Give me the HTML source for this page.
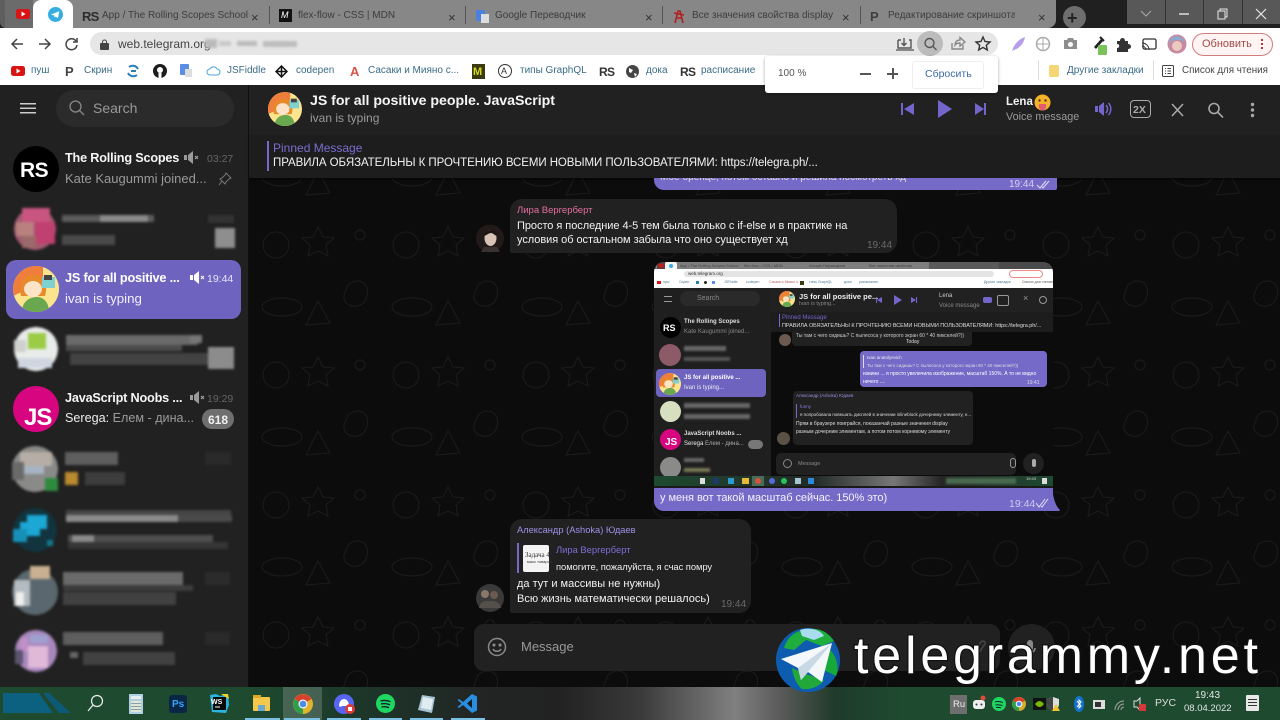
<!DOCTYPE html>
<html lang="ru"><head><meta charset="utf-8"><title>Telegram</title>
<style>
html,body{margin:0;padding:0;background:#0d0d0d}
#p{position:relative;width:1280px;height:720px;overflow:hidden;font-family:"Liberation Sans","Noto Sans CJK SC",sans-serif;background:#0d0d0d}
#p div,#p span.t,#p svg.a{position:absolute}
.t{white-space:nowrap;line-height:1;position:absolute}
.tab{font-size:10px;color:#3d3d3d}
.x{font-size:13px;color:#333}
.bm{font-size:10px;color:#3a6b86;top:66px}
.dk{color:#333}
.m{font-size:11px;letter-spacing:-.05px;color:#f2f2f2}
.gt{font-size:10px;color:#6a6a6a}
.n .t{font-size:6px;color:#ddd}
.nm{font:bold 12.700px 'Liberation Sans';letter-spacing:-.2px}
</style></head><body><div id="p">

<svg width="0" height="0" style="position:absolute"><defs>
<symbol id="um" viewBox="0 0 46 46"><clipPath id="c1"><circle cx="23" cy="23" r="23"/></clipPath><g clip-path="url(#c1)"><rect width="46" height="46" fill="#fbe48e"/><path d="M0 0h30v16L0 30z" fill="#ef7d3c"/><path d="M8 30C4 12 18 6 26 10c8 3 8 14 6 20z" fill="#e88a2a"/><ellipse cx="20" cy="23" rx="9" ry="8" fill="#fde3c8"/><path d="M9 46c0-11 8-15 15-15s12 6 12 15z" fill="#6aa84f"/><rect x="29" y="11" width="13" height="11" fill="#7fd0d0"/><rect x="31" y="9" width="8" height="5" fill="#444"/></g></symbol>
<pattern id="dd" width="130" height="130" patternUnits="userSpaceOnUse"><g fill="none" stroke="#1b1b1b" stroke-width="1"><circle cx="28" cy="30" r="13"/><path d="M70 12l5 10 11 1-8 7 2 11-10-5-10 5 2-11-8-7 11-1z"/><path d="M100 70c12-10 24 0 18 14-5 12-24 8-22-4z"/><ellipse cx="34" cy="92" rx="20" ry="9"/><path d="M70 86l12 22-24 2z"/><circle cx="112" cy="20" r="5"/></g></pattern>
</defs></svg>

<!-- tab strip -->
<div style="left:0;top:0;width:1280px;height:28px;background:#202020"></div>
<div style="left:5px;top:0;width:1051px;height:28px;background:#878787;border-radius:0 0 8px 0"></div>
<div style="left:0;top:0;width:33px;height:28px;background:#5e5e5e;border-radius:0 0 0 6px"></div>
<div style="left:5px;top:0;width:28px;height:28px;background:#6b6b6b"></div>
<div style="left:33px;top:0;width:40px;height:28px;background:#fff;border-radius:8px 8px 0 0"></div>
<svg class="a" style="left:16px;top:9px" width="14" height="10"><rect width="14" height="10" rx="2.500" fill="#d81414"/><path d="M5.500 2.500l4 2.500-4 2.500z" fill="#fff"/></svg>
<svg class="a" style="left:48px;top:7px" width="15" height="15"><circle cx="7.500" cy="7.500" r="7.500" fill="#37aee2"/><path d="M3 7.500l8.300-3.200-1.400 6.800-2.200-1.600-1.200 1.100-.2-2z" fill="#fff"/></svg>
<div class="t" style="left:82px;top:9px;font:bold 13px 'Liberation Sans';color:#2d2d2d;letter-spacing:-.8px">RS</div>
<div class="t tab" style="left:102px;top:11px">App / The Rolling Scopes School</div>
<div class="t x" style="left:251px;top:11px">×</div>
<div style="left:269px;top:6px;width:1px;height:18px;background:#555"></div>
<div style="left:279px;top:9px;width:13px;height:13px;background:#111"></div><div class="t" style="left:281px;top:11px;font-size:9px;color:#fff;font-style:italic">M</div>
<div class="t tab" style="left:298px;top:11px">flex-flow - CSS | MDN</div>
<div class="t x" style="left:448px;top:11px">×</div>
<div style="left:465px;top:6px;width:1px;height:18px;background:#555"></div>
<div style="left:476px;top:10px;width:9px;height:11px;background:#4a80e0;border-radius:1px"></div><div style="left:481px;top:14px;width:8px;height:9px;background:#ddd"></div>
<div class="t tab" style="left:495px;top:11px">Google Переводчик</div>
<div class="t x" style="left:645px;top:11px">×</div>
<div style="left:662px;top:6px;width:1px;height:18px;background:#555"></div>
<svg class="a" style="left:673px;top:9px" width="12" height="15"><path d="M2 14L5 2h2l3 12M1 4l10 2M3 9h6" stroke="#b02020" stroke-width="1.600" fill="none"/></svg>
<div class="t tab" style="left:692px;top:11px">Все значения свойства display</div>
<div class="t x" style="left:842px;top:11px">×</div>
<div style="left:860px;top:6px;width:1px;height:18px;background:#555"></div>
<div class="t" style="left:870px;top:9px;font:bold 13px 'Liberation Sans';color:#3f3f3f">P</div>
<div class="t tab" style="left:888px;top:11px;width:127px;overflow:hidden">Редактирование скриншота - Lightshot</div>
<div class="t x" style="left:1038px;top:11px">×</div>
<div style="left:1063px;top:6px;width:23px;height:23px;border-radius:50%;background:#6e6e6e"></div>
<div class="t" style="left:1067px;top:9px;font-size:18px;color:#222;font-weight:bold">+</div>
<!-- window controls -->
<div style="left:1127px;top:0;width:153px;height:24px;background:#585858"></div>
<div style="left:1165px;top:0;width:1px;height:24px;background:#333"></div><div style="left:1203px;top:0;width:1px;height:24px;background:#333"></div><div style="left:1242px;top:0;width:1px;height:24px;background:#333"></div>
<svg class="a" style="left:1140px;top:8px" width="140" height="12" fill="none" stroke="#e8e8e8" stroke-width="1"><path d="M1 3l5 5 5-5" stroke="#aaa"/><path d="M39 6h10" stroke-width="1.400"/><path d="M78 3h7v8h-7zM80 3V1h7v8h-2"/><path d="M116 1l10 10M126 1l-10 10" stroke-width="1.200"/></svg>

<!-- toolbar -->
<div style="left:0;top:28px;width:1280px;height:57px;background:#fff"></div>
<div style="left:90px;top:32px;width:908px;height:23px;border-radius:12px;background:#e6e6e6"></div>
<svg class="a" style="left:10px;top:36px" width="72" height="16" fill="none" stroke="#444" stroke-width="1.500"><path d="M13 8H2M7 3L2 8l5 5"/><path d="M29 8h11M35 3l5 5-5 5"/><path d="M66 5a5.500 5.500 0 1 0 1 4M67 2v4h-4"/></svg>
<svg class="a" style="left:100px;top:39px" width="9" height="11"><rect y="4" width="9" height="7" rx="1" fill="#444"/><path d="M2.500 4.500V3a2 2 0 0 1 4 0v1.500" stroke="#444" fill="none"/></svg>
<div class="t" style="left:118px;top:38px;font-size:12px;color:#444">web.telegram.org</div>
<svg class="a" style="left:205px;top:38px;filter:blur(1.200px)" width="95" height="12"><rect x="0" y="1" width="12" height="9" fill="#bbb"/><rect x="14" y="3" width="12" height="5" fill="#c8c8c8"/><rect x="32" y="3" width="20" height="5" fill="#bbb"/><rect x="58" y="3" width="34" height="6" fill="#bdbdbd"/></svg>
<div style="left:917px;top:31px;width:26px;height:25px;border-radius:50%;background:#bcbcbc"></div>
<svg class="a" style="left:895px;top:35px" width="100" height="18" fill="none" stroke="#555" stroke-width="1.400"><path d="M3 5h3M14 5h2v8H3V5M9 3v7M6.500 8L9 10.500 11.500 8"/><path d="M1 15h18" stroke="#666"/><circle cx="34.500" cy="8" r="4.500"/><path d="M38 11.500l3.500 3.500"/><path d="M57 8v6h11v-4M60 10c0-3 2-5 5-5V2.500l5 4.500-5 4V8c-2 0-4 .5-5 2z" stroke="#888"/><path d="M88 2l2 4.500 5 .5-3.700 3.200 1 4.800-4.300-2.600L83.700 15l1-4.800L81 7l5-.5z" stroke="#333"/></svg>
<svg class="a" style="left:1008px;top:34px" width="170" height="22"><path d="M4 17C6 10 11 5 17 3c-1 6-5 11-11 13z" fill="#b79ee8"/><circle cx="35" cy="10" r="6.500" fill="none" stroke="#a9a9a9" stroke-width="1.500"/><path d="M29 10h12M35 3.500v13" stroke="#a9a9a9"/><path d="M56 6h3l1-2h5l1 2h3v9H56z" fill="#8e8e8e"/><circle cx="62.500" cy="10.500" r="2.500" fill="#fff"/><path d="M86 13l7-8 2 2-7 8z" fill="#222"/><path d="M92 3l4 4" stroke="#222" stroke-width="2"/><rect x="90" y="11" width="9" height="10" rx="1" fill="#7ac25a"/><path d="M109 7h3c0-4 5-4 5 0h3v3c4 0 4 5 0 5v3h-11v-4c3 0 3-4 0-4z" fill="#333"/><rect x="135" y="5" width="13" height="10" rx="1.500" fill="none" stroke="#333" stroke-width="1.300"/><path d="M134 12a4 4 0 0 1 4 4M134 9a7 7 0 0 1 7 7" stroke="#333" fill="none"/></svg>
<svg class="a" style="left:1167px;top:34px" width="20" height="20"><circle cx="10" cy="10" r="9.500" fill="#c88aa0"/><path d="M2 9c0-8 14-10 16 0-3-3-6-3-8-3s-6 1-8 3z" fill="#8fa8cc"/><circle cx="10" cy="12" r="5" fill="#edc8c0"/></svg>
<div style="left:1192px;top:33px;width:79px;height:21px;border:1px solid #d27d7d;border-radius:12px;background:#fdf4f3"></div>
<div class="t" style="left:1202px;top:39px;font-size:11px;color:#a24a46">Обновить</div>
<div style="left:1261px;top:39px;width:2px;height:2px;background:#b33;box-shadow:0 4px 0 #b33,0 8px 0 #b33"></div>

<!-- bookmarks -->
<svg class="a" style="left:11px;top:66px" width="14" height="10"><rect width="14" height="10" rx="2.500" fill="#d81414"/><path d="M5.500 2.500l4 2.500-4 2.500z" fill="#fff"/></svg>
<div class="t bm" style="left:31px">пуш</div>
<div class="t" style="left:65px;top:64px;font:bold 13px 'Liberation Sans';color:#444">P</div>
<div class="t bm" style="left:84px">Скрин</div>
<svg class="a" style="left:126px;top:64px" width="14" height="14" fill="none" stroke="#2b7fb8" stroke-width="2"><path d="M3 3a6 6 0 0 1 9 2M11 11a6 6 0 0 1-9-2M5 7h5"/></svg>
<svg class="a" style="left:153px;top:64px" width="14" height="14"><circle cx="7" cy="7" r="7" fill="#1d1d1d"/><circle cx="7" cy="6" r="3" fill="#fff"/><rect x="5.500" y="9" width="3" height="5" fill="#fff"/></svg>
<div style="left:180px;top:64px;width:9px;height:11px;background:#5a8ee6;border-radius:1px"></div><div style="left:185px;top:69px;width:7px;height:8px;background:#ddd"></div>
<svg class="a" style="left:206px;top:65px" width="15" height="12" fill="none" stroke="#4aa3d8"><path d="M4 10a3 3 0 0 1 0-6 4 4 0 0 1 7 0 3 3 0 0 1 0 6z"/></svg>
<div class="t bm" style="left:227px">JSFiddle</div>
<svg class="a" style="left:275px;top:65px" width="13" height="13" fill="none" stroke="#111" stroke-width="1.500"><path d="M6.500 1l5.500 5.500-5.500 5.500L1 6.500z"/><path d="M1 6.500h11M6.500 1v11"/></svg>
<div class="t bm" style="left:296px">codepen</div>
<div class="t" style="left:350px;top:64px;font:bold 13px 'Liberation Sans';color:#d9534a">A</div>
<div class="t bm" style="left:368px">Сасаки и Мияно с...</div>
<div style="left:472px;top:64px;width:13px;height:15px;background:#3a3a10"></div><div class="t" style="left:473px;top:66px;font:bold 11px 'Liberation Sans';color:#d8d820">M</div>
<div style="left:498px;top:64px;width:12px;height:12px;border:1px solid #333;border-radius:50%"></div><div class="t" style="left:501px;top:67px;font-size:9px;color:#333">A</div>
<div class="t bm" style="left:520px">типы GraphQL</div>
<div class="t" style="left:599px;top:65px;font:bold 12px 'Liberation Sans';color:#333;letter-spacing:-.7px">RS</div>
<svg class="a" style="left:626px;top:65px" width="13" height="13"><circle cx="6.500" cy="6.500" r="6.500" fill="#444"/><path d="M3 3l4 2-2 3-2-1zM8 8l3 1-2 3z" fill="#fff"/></svg>
<div class="t bm" style="left:646px">дока</div>
<div class="t" style="left:680px;top:65px;font:bold 12px 'Liberation Sans';color:#333;letter-spacing:-.7px">RS</div>
<div class="t bm" style="left:701px">расписание</div>
<div style="left:1038px;top:60px;width:1px;height:20px;background:#ddd"></div>
<div style="left:1049px;top:65px;width:10px;height:12px;background:#f4d774;border-radius:2px"></div>
<div class="t bm" style="left:1067px">Другие закладки</div>
<div style="left:1153px;top:60px;width:1px;height:20px;background:#ddd"></div>
<svg class="a" style="left:1162px;top:65px" width="12" height="12" fill="none" stroke="#444"><rect x=".5" y=".5" width="11" height="11" rx="1"/><path d="M3 3.500h1M3 6h1M3 8.500h1M5.500 3.500H9M5.500 6H9M5.500 8.500H9"/></svg>
<div class="t bm" style="left:1182px;color:#444;font-size:9.800px">Список для чтения</div>

<!-- app bg -->
<svg class="a" style="left:248px;top:85px" width="1032" height="602"><rect width="1032" height="602" fill="#0c0c0c"/><rect width="1032" height="602" fill="url(#dd)"/></svg>

<!-- sidebar -->
<div style="left:0;top:85px;width:248px;height:602px;background:#212121;border-right:1px solid #101010"></div>
<svg class="a" style="left:20px;top:103px" width="16" height="11" fill="#ccc"><rect width="16" height="1.500"/><rect y="4.500" width="16" height="1.500"/><rect y="9" width="16" height="1.500"/></svg>
<div style="left:56px;top:90px;width:178px;height:37px;border-radius:19px;background:#2b2b2b"></div>
<svg class="a" style="left:69px;top:100px" width="16" height="16" fill="none" stroke="#888" stroke-width="1.300"><circle cx="6.500" cy="6.500" r="5.500"/><path d="M10.500 10.500l4.500 4.500"/></svg>
<div class="t" style="left:93px;top:101px;font-size:14px;color:#9a9a9a">Search</div>

<div style="left:13px;top:146px;width:46px;height:46px;border-radius:50%;background:#000"></div>
<div class="t" style="left:20px;top:159px;font:bold 21px 'Liberation Sans';color:#fff;letter-spacing:-.5px">RS</div>
<div class="t nm" style="left:65px;top:151px;color:#f5f5f5">The Rolling Scopes</div>
<svg class="a" style="left:184px;top:151px" width="16" height="13"><path d="M0 4h3v5H0zM4 4l5-4v13L4 9z" fill="#9a9a9a"/><path d="M11 5l3 3M14 5l-3 3" stroke="#aaa"/></svg>
<div class="t" style="left:207px;top:154px;font-size:10.500px;color:#666">03:27</div>
<div class="t" style="left:65px;top:172px;font-size:13px;color:#9a9a9a">Kate Kaugummi joined...</div>
<svg class="a" style="left:218px;top:172px" width="14" height="14" fill="none" stroke="#777"><path d="M8 1l5 5-2 1-3 3-1 2-5-5 2-1 3-3zM4 9l-3 4"/></svg>

<div style="left:6px;top:260px;width:235px;height:59px;border-radius:10px;background:#6f63c0"></div>
<svg class="a" style="left:13px;top:266px" width="46" height="46"><use href="#um"/></svg>
<div class="t nm" style="left:65px;top:271px;color:#fff">JS for all positive ...</div>
<svg class="a" style="left:190px;top:271px" width="16" height="13"><path d="M0 4h3v5H0zM4 4l5-4v13L4 9z" fill="#fff"/><path d="M11 5l3 3M14 5l-3 3" stroke="#fff"/></svg>
<div class="t" style="left:207px;top:274px;font-size:10.500px;color:#e9e6f8">19:44</div>
<div class="t" style="left:65px;top:292px;font-size:13.300px;color:#f1effb">ivan is typing</div>

<div style="left:13px;top:386px;width:46px;height:46px;border-radius:50%;background:#d7057f"></div>
<div class="t" style="left:24px;top:404px;font:bold 24px 'Liberation Sans';color:#fff;letter-spacing:-1px">JS</div>
<div class="t nm" style="left:65px;top:391px;color:#f5f5f5">JavaScript Noobs ...</div>
<svg class="a" style="left:190px;top:391px" width="16" height="13"><path d="M0 4h3v5H0zM4 4l5-4v13L4 9z" fill="#9a9a9a"/><path d="M11 5l3 3M14 5l-3 3" stroke="#aaa"/></svg>
<div class="t" style="left:207px;top:394px;font-size:10.500px;color:#666">19:29</div>
<div class="t" style="left:65px;top:412px;font-size:12.600px;color:#9a9a9a"><span style="color:#eee">Serega:</span> Елем - дина...</div>
<div style="left:202px;top:409px;width:32px;height:20px;border-radius:10px;background:#6f6f6f"></div>
<div class="t" style="left:208px;top:413px;font:bold 12px 'Liberation Sans';color:#f2f2f2">618</div>

<!-- pixelated rows -->
<svg class="a" style="left:0;top:190px;filter:blur(1.300px)" width="248" height="497" shape-rendering="crispEdges">
<g transform="translate(0,-190)">
<!-- row 2 -->
<circle cx="35" cy="229" r="21" fill="#a15a70"/><rect x="22" y="208" width="28" height="14" fill="#c8557f"/><rect x="35" y="222" width="20" height="22" fill="#c04070"/><rect x="16" y="222" width="18" height="14" fill="#b8807f"/><rect x="22" y="236" width="14" height="12" fill="#9c6a68"/>
<rect x="62" y="215" width="92" height="7" fill="#5c5c5c"/><rect x="100" y="215" width="48" height="7" fill="#8a8a8a"/><rect x="62" y="235" width="53" height="10" fill="#4a4a4a"/><rect x="208" y="215" width="26" height="8" fill="#333"/><rect x="215" y="228" width="20" height="20" fill="#8e8e8e"/>
<!-- row 4 -->
<circle cx="36" cy="349" r="22" fill="#e8ecea"/><rect x="28" y="333" width="18" height="16" fill="#9bcc45"/><rect x="14" y="340" width="12" height="12" fill="#cfcfcf"/><rect x="18" y="358" width="34" height="10" fill="#cfd6e0"/>
<rect x="66" y="335" width="132" height="10" fill="#6a6a6a"/><rect x="66" y="345" width="116" height="6" fill="#4c4c4c"/><rect x="70" y="353" width="140" height="12" fill="#434343"/><rect x="208" y="347" width="26" height="22" fill="#8c8c8c"/><rect x="190" y="335" width="12" height="8" fill="#777"/>
<!-- row after JS -->
<circle cx="35" cy="469" r="23" fill="#8a8a88"/><rect x="20" y="452" width="32" height="14" fill="#b6aea6"/><rect x="24" y="466" width="20" height="8" fill="#a8b4c4"/><rect x="45" y="478" width="13" height="13" fill="#2f8a3e"/><rect x="12" y="462" width="12" height="18" fill="#6a6a6a"/>
<rect x="65" y="452" width="53" height="13" fill="#5e5e5e"/><rect x="65" y="472" width="13" height="13" fill="#b98a2e"/><rect x="85" y="472" width="40" height="13" fill="#3d3d3d"/><rect x="205" y="452" width="26" height="13" fill="#2a2a2a"/>
<!-- teal row -->
<circle cx="35" cy="530" r="22" fill="#11343e"/><rect x="27" y="515" width="20" height="14" fill="#1ca7d4"/><rect x="20" y="522" width="20" height="14" fill="#1ca7d4"/><rect x="13" y="529" width="14" height="13" fill="#1690b8"/><rect x="47" y="540" width="6" height="6" fill="#13788a"/>
<rect x="66" y="510" width="165" height="5" fill="#454545"/><rect x="66" y="515" width="112" height="7" fill="#8a8a8a"/><rect x="178" y="515" width="54" height="7" fill="#4a4a4a"/><rect x="68" y="535" width="145" height="7" fill="#4e4e4e"/><rect x="68" y="542" width="160" height="7" fill="#363636"/><rect x="72" y="535" width="22" height="7" fill="#8a8a8a"/>
<!-- row 8 -->
<circle cx="35" cy="592" r="23" fill="#5a676e"/><rect x="30" y="566" width="20" height="13" fill="#c8b090"/><rect x="14" y="580" width="16" height="26" fill="#b4bcc0"/><rect x="16" y="592" width="8" height="14" fill="#eee"/>
<rect x="63" y="572" width="120" height="13" fill="#6a6a6a"/><rect x="63" y="585" width="130" height="6" fill="#3c3c3c"/><rect x="63" y="592" width="113" height="13" fill="#414141"/><rect x="205" y="572" width="25" height="13" fill="#2b2b2b"/>
<!-- row 9 -->
<circle cx="36" cy="651" r="21" fill="#a888bc"/><rect x="30" y="635" width="18" height="8" fill="#9ea0d0"/><rect x="28" y="646" width="20" height="22" fill="#e0b8d8"/><rect x="20" y="638" width="8" height="14" fill="#c090c8"/><rect x="15" y="650" width="8" height="14" fill="#5e5470"/>
<rect x="63" y="632" width="100" height="13" fill="#5e5e5e"/><rect x="83" y="652" width="92" height="13" fill="#424242"/><rect x="70" y="652" width="8" height="6" fill="#666"/><rect x="205" y="632" width="25" height="13" fill="#2a2a2a"/>
</g></svg>

<!-- chat header -->
<div style="left:249px;top:85px;width:1031px;height:50px;background:#212121"></div>
<div style="left:249px;top:135px;width:1031px;height:43px;background:#1d1d1d;box-shadow:0 2px 2px rgba(0,0,0,.5)"></div>
<svg class="a" style="left:268px;top:92px" width="34" height="34"><use href="#um"/></svg>
<div class="t" style="left:310px;top:93px;font:bold 14.200px 'Liberation Sans';color:#f5f5f5;letter-spacing:-.05px">JS for all positive people. JavaScript</div>
<div class="t" style="left:310px;top:112px;font-size:12px;color:#9a9a9a">ivan is typing</div>
<div style="left:267px;top:141px;width:2px;height:30px;background:#766ac8"></div>
<div class="t" style="left:273px;top:142px;font-size:12px;color:#7b6ed0">Pinned Message</div>
<div class="t" style="left:273px;top:158px;font-size:11.500px;color:#f2f2f2;letter-spacing:-.07px">ПРАВИЛА ОБЯЗАТЕЛЬНЫ К ПРОЧТЕНИЮ ВСЕМИ НОВЫМИ ПОЛЬЗОВАТЕЛЯМИ: https://telegra.ph/...</div>

<!-- player -->
<svg class="a" style="left:898px;top:98px" width="92" height="22" fill="#7265cc"><path d="M3 5h2v12H3zM16 5v12L6 11z"/><path d="M40 2l14 9-14 9z"/><path d="M77 5v12l9-6zM86 5h2v12h-2z"/></svg>
<div class="t" style="left:1006px;top:96px;font:bold 11.500px 'Liberation Sans';color:#f2f2f2">Lena</div>
<svg class="a" style="left:1034px;top:94px" width="17" height="18"><circle cx="8.500" cy="8.500" r="8" fill="#f5b32a"/><circle cx="5.500" cy="6.500" r="1.200" fill="#5a3a10"/><circle cx="11.500" cy="6.500" r="1.200" fill="#5a3a10"/><path d="M5 10h7v3a3.500 3.500 0 0 1-7 0z" fill="#e45a70"/></svg>
<div class="t" style="left:1006px;top:112px;font-size:10.800px;color:#9a9a9a">Voice message</div>
<svg class="a" style="left:1094px;top:100px" width="20" height="18"><path d="M1 6h3v6H1zM5 6l5-4v14l-5-4z" fill="#7265cc"/><path d="M12 5a6 6 0 0 1 0 8M14.500 3a9 9 0 0 1 0 12" stroke="#7265cc" stroke-width="1.500" fill="none"/></svg>
<div style="left:1130px;top:100px;width:19px;height:16px;border:1.500px solid #aaa;border-radius:4px"></div>
<div class="t" style="left:1133px;top:104px;font:bold 10.500px 'Liberation Sans';color:#aaa">2X</div>
<svg class="a" style="left:1170px;top:102px" width="92" height="16" fill="none" stroke="#a8a8a8" stroke-width="1.600"><path d="M2 2l11 12M13 2L2 14"/><circle cx="44" cy="6.500" r="5"/><path d="M48 10.500l5 5"/></svg>
<svg class="a" style="left:1250px;top:102px" width="5" height="16" fill="#a8a8a8"><circle cx="2.500" cy="2.500" r="1.700"/><circle cx="2.500" cy="8" r="1.700"/><circle cx="2.500" cy="13.500" r="1.700"/></svg>

<!-- partial purple -->
<div style="left:654px;top:178px;width:403px;height:12px;background:#766ac8;border-radius:0 0 2px 10px"></div>
<div style="left:660px;top:178px;width:300px;height:6px;overflow:hidden"><div class="t" style="top:-5px;left:0;font-size:10px;color:#ddd">Мое бренце, потом оставло и решила посмотреть хд</div></div>
<div class="t" style="left:1009px;top:180px;font-size:10px;color:#d5d0f0">19:44</div>
<svg class="a" style="left:1036px;top:180px" width="16" height="9" fill="none" stroke="#e4e0f5"><path d="M1 5l3 3 6-7M6 7l1 1 6-7"/></svg>

<!-- Lira -->
<div style="left:510px;top:199px;width:387px;height:54px;background:#212121;border-radius:12px 12px 12px 2px"></div>
<svg class="a" style="left:476px;top:224px" width="28" height="29"><circle cx="14" cy="14.500" r="14" fill="#221a18"/><ellipse cx="14.500" cy="14" rx="6" ry="8" fill="#d9c3b4"/><path d="M8 12c1-4 4-6 7-6s5 2 6 6c-3-1-4-3-6-3s-4 2-7 3z" fill="#1a1412"/><path d="M5 28l3-5h13l3 5z" fill="#3a3230"/></svg>
<div class="t" style="left:517px;top:206px;font-size:9.500px;color:#e56f9f">Лира Вергерберт</div>
<div class="t m" style="left:517px;top:221px">Просто я последние 4-5 тем была только с if-else и в практике на</div>
<div class="t m" style="left:517px;top:235px">условия об остальном забыла что оно существует хд</div>
<div class="t gt" style="left:867px;top:241px">19:44</div>

<!-- image bubble -->
<div style="left:654px;top:262px;width:399px;height:226px;background:#1a1a1a;border-radius:10px 10px 0 0;overflow:hidden" class="n">
 <div style="left:0;top:0;width:399px;height:7px;background:#5a5a5a"></div>
 <div style="left:2px;top:0;width:273px;height:7px;background:#7e7e7e"></div>
 <div style="left:3px;top:0;width:8px;height:7px;background:#6a3a3a"></div>
 <div style="left:5px;top:2px;width:4px;height:3px;background:#d81414"></div>
 <div style="left:11px;top:0;width:12px;height:7px;background:#f4f4f4;border-radius:2px 2px 0 0"></div>
 <div style="left:15px;top:1.500px;width:4px;height:4px;border-radius:50%;background:#37aee2"></div>
 <div class="t" style="left:26px;top:1.500px;font-size:4px;color:#444">App / The Rolling Scopes School</div>
 <div class="t" style="left:90px;top:1.500px;font-size:4px;color:#444">flex-flow - CSS | MDN</div>
 <div class="t" style="left:155px;top:1.500px;font-size:4px;color:#444">Google Переводчик</div>
 <div class="t" style="left:215px;top:1.500px;font-size:4px;color:#444">Все значения свойства</div>
 <div style="left:345px;top:0;width:54px;height:7px;background:#4a4a4a"></div>
 <div style="left:0;top:7px;width:399px;height:19px;background:#fff"></div>
 <div style="left:30px;top:9px;width:310px;height:6px;border-radius:3px;background:#e4e4e4"></div>
 <div class="t" style="left:34px;top:9.500px;font-size:4.500px;color:#333">web.telegram.org</div>
 <div style="left:3px;top:19px;width:4px;height:3px;background:#d81414"></div>
 <div class="t" style="left:9px;top:18.500px;font-size:3.500px;color:#4a7a96">пуш</div>
 <div class="t" style="left:25px;top:18.500px;font-size:3.500px;color:#4a7a96">Скрин</div>
 <div style="left:42px;top:19px;width:3px;height:3px;background:#2b7fb8"></div><div style="left:50px;top:19px;width:3px;height:3px;background:#222;border-radius:50%"></div><div style="left:58px;top:19px;width:3px;height:3px;background:#5a8ee6"></div>
 <div class="t" style="left:70px;top:18.500px;font-size:3.500px;color:#4a7a96">JSFiddle</div>
 <div class="t" style="left:92px;top:18.500px;font-size:3.500px;color:#4a7a96">codepen</div>
 <div class="t" style="left:115px;top:18.500px;font-size:3.500px;color:#b06060">Сасаки и Мияно с...</div>
 <div style="left:146px;top:19px;width:4px;height:4px;background:#3a3a10"></div>
 <div class="t" style="left:155px;top:18.500px;font-size:3.500px;color:#4a7a96">типы GraphQL</div>
 <div class="t" style="left:190px;top:18.500px;font-size:3.500px;color:#4a7a96">дока</div>
 <div class="t" style="left:205px;top:18.500px;font-size:3.500px;color:#4a7a96">расписание</div>
 <div class="t" style="left:330px;top:18.500px;font-size:3.500px;color:#4a7a96">Другие закладки</div>
 <div class="t" style="left:368px;top:18.500px;font-size:3.500px;color:#555">Список для чтения</div>
 <div style="left:355px;top:8px;width:34px;height:8px;border:1px solid #e88;border-radius:4px;box-sizing:border-box;background:#fff"></div>
 <div style="left:0;top:26px;width:399px;height:44px;background:#212121"></div>
 <div style="left:0;top:26px;width:117px;height:188px;background:#1f1f1f"></div>
 <div style="left:117px;top:70px;width:282px;height:144px;background:#0c0c0c"></div>
 <div style="left:117px;top:50px;width:282px;height:20px;background:#1d1d1d"></div>
 <!-- sidebar nested -->
 <div style="left:10px;top:34px;width:8px;height:4px;border-top:1px solid #999;border-bottom:1px solid #999"></div>
 <div style="left:26px;top:29px;width:80px;height:15px;border-radius:8px;background:#2a2a2a"></div>
 <div class="t" style="left:43px;top:33px;font-size:7px;color:#888">Search</div>
 <div style="left:6px;top:55px;width:21px;height:21px;border-radius:50%;background:#000"></div>
 <div class="t" style="left:9px;top:61px;font:bold 9px 'Liberation Sans';color:#fff">RS</div>
 <div class="t" style="left:30px;top:57px;font:bold 6px 'Liberation Sans';color:#ddd">The Rolling Scopes</div>
 <div class="t" style="left:30px;top:67px;font-size:6px;color:#888">Kate Kaugummi joined...</div>
 <div style="left:5px;top:82px;width:22px;height:22px;border-radius:50%;background:#8d5a68"></div>
 <div style="left:30px;top:84px;width:42px;height:5px;background:#666;filter:blur(1px)"></div>
 <div style="left:30px;top:95px;width:46px;height:4px;background:#555;filter:blur(1px)"></div>
 <div style="left:2px;top:107px;width:110px;height:28px;border-radius:4px;background:#6f63c0"></div>
 <svg class="a" style="left:5px;top:111px" width="22" height="22"><use href="#um"/></svg>
 <div class="t" style="left:30px;top:113px;font:bold 6px 'Liberation Sans';color:#fff">JS for all positive ...</div>
 <div class="t" style="left:30px;top:123px;font-size:6px;color:#eee">Ivan is typing...</div>
 <div style="left:6px;top:139px;width:21px;height:21px;border-radius:50%;background:#d6e0c0"></div>
 <div style="left:30px;top:141px;width:66px;height:5px;background:#666;filter:blur(1px)"></div>
 <div style="left:30px;top:152px;width:66px;height:5px;background:#666;filter:blur(1px)"></div>
 <div style="left:6px;top:167px;width:21px;height:21px;border-radius:50%;background:#d7057f"></div>
 <div class="t" style="left:11px;top:175px;font:bold 10px 'Liberation Sans';color:#fff">JS</div>
 <div class="t" style="left:30px;top:169px;font:bold 6px 'Liberation Sans';color:#ddd">JavaScript Noobs ...</div>
 <div class="t" style="left:30px;top:179px;font-size:6px;color:#aaa"><span style="color:#eee">Serega</span> Елем - дина...</div>
 <div style="left:94px;top:178px;width:15px;height:9px;border-radius:5px;background:#777"></div>
 <div style="left:6px;top:195px;width:21px;height:21px;border-radius:50%;background:#8a8a88"></div>
 <div style="left:30px;top:196px;width:20px;height:4px;background:#666;filter:blur(1px)"></div>
 <div style="left:30px;top:206px;width:26px;height:4px;background:#775;filter:blur(1px)"></div>
 <!-- header nested -->
 <svg class="a" style="left:125px;top:29px" width="16" height="16"><use href="#um"/></svg>
 <div class="t" style="left:145px;top:30px;font:bold 7.500px 'Liberation Sans';color:#eee">JS for all positive pe...</div>
 <div class="t" style="left:145px;top:40px;font-size:5.500px;color:#888">Ivan is typing...</div>
 <svg class="a" style="left:220px;top:32px" width="52" height="12" fill="#7265cc"><path d="M2 3v6l5-3zM7 3h1v6H7z" transform="matrix(-1 0 0 1 10 0)"/><path d="M20 1l8 5-8 5z"/><path d="M37 3v6l5-3zM42 3h1v6h-1z"/></svg>
 <div class="t" style="left:285px;top:31px;font-size:6px;color:#ccc">Lena</div>
 <div class="t" style="left:285px;top:41px;font-size:6px;color:#888">Voice message</div>
 <div style="left:329px;top:35px;width:9px;height:6px;background:#7265cc;border-radius:2px"></div>
 <div style="left:343px;top:33px;width:10px;height:9px;border:1px solid #999;border-radius:2px"></div>
 <div class="t" style="left:369px;top:32px;font-size:9px;color:#999">×</div>
 <div style="left:385px;top:34px;width:6px;height:6px;border:1px solid #999;border-radius:50%"></div>
 <div style="left:125px;top:52px;width:1px;height:13px;background:#766ac8"></div>
 <div class="t" style="left:128px;top:53px;font-size:6px;color:#7265cc">Pinned Message</div>
 <div class="t" style="left:128px;top:62px;font-size:5.500px;color:#ddd;letter-spacing:-.05px">ПРАВИЛА ОБЯЗАТЕЛЬНЫ К ПРОЧТЕНИЮ ВСЕМИ НОВЫМИ ПОЛЬЗОВАТЕЛЯМИ: https://telegra.ph/...</div>
 <!-- msg nested -->
 <div style="left:138px;top:70px;width:180px;height:14px;background:#212121;border-radius:0 0 4px 4px"></div>
 <div style="left:125px;top:72px;width:12px;height:12px;border-radius:50%;background:#6a5a50"></div>
 <div class="t" style="left:142px;top:72px;font-size:5px;color:#ccc">Ты там с чего сидишь? С пылесоса у которого экран 60 * 40 пикселей?))</div>
 <div class="t" style="left:252px;top:78px;font-size:5px;color:#ddd;background:#222">Today</div>
 <div style="left:206px;top:89px;width:187px;height:36px;background:#766ac8;border-radius:4px"></div>
 <div class="t" style="left:213px;top:94px;font-size:4.500px;color:#eee">Ivan anatolyevich</div>
 <div style="left:209px;top:93px;width:1px;height:13px;background:#ddd"></div>
 <div class="t" style="left:213px;top:102px;font-size:4.500px;color:#ddd">Ты там с чего сидишь? С пылесоса у которого экран 60 * 40 пикселей?))</div>
 <div class="t" style="left:209px;top:110px;font-size:5px;color:#fff">извини ... я просто увеличила изображение, масштаб 150%. А то не видно</div>
 <div class="t" style="left:209px;top:118px;font-size:5px;color:#fff">ничего ....</div>
 <div class="t" style="left:373px;top:119px;font-size:5px;color:#ddd">19:41</div>
 <div style="left:139px;top:129px;width:180px;height:54px;background:#212121;border-radius:4px"></div>
 <div class="t" style="left:142px;top:132px;font-size:4.500px;color:#9a8fe0">Александр (Ashoka) Юдаев</div>
 <div style="left:142px;top:142px;width:1px;height:14px;background:#766ac8"></div>
 <div class="t" style="left:146px;top:143px;font-size:4.500px;color:#8a7ee0">funny</div>
 <div class="t" style="left:146px;top:151px;font-size:4.500px;color:#ddd">я попробовала повешать дисплей в значении inlineblock дочернему элементу, н...</div>
 <div class="t" style="left:142px;top:160px;font-size:5px;color:#ddd">Прям в браузере поиграйся, показанчай разные значения display</div>
 <div class="t" style="left:142px;top:168px;font-size:5px;color:#ddd">разным дочерним элементам, а потом потом корневому элементу</div>
 <div style="left:123px;top:170px;width:13px;height:13px;border-radius:50%;background:#5a5246"></div>
 <div style="left:122px;top:191px;width:240px;height:22px;background:#212121;border-radius:5px"></div>
 <div style="left:369px;top:191px;width:21px;height:21px;background:#212121;border-radius:50%"></div>
 <div style="left:129px;top:197px;width:7px;height:7px;border:1px solid #888;border-radius:50%"></div>
 <div class="t" style="left:144px;top:200px;font-size:5.500px;color:#888">Message</div>
 <div style="left:356px;top:196px;width:4px;height:8px;border:1px solid #999;border-radius:3px"></div>
 <div style="left:378px;top:197px;width:4px;height:8px;background:#aaa;border-radius:3px"></div>
 <!-- taskbar nested -->
 <div style="left:0;top:214px;width:399px;height:10px;background:linear-gradient(90deg,#1e4a30 0,#222a26 40%,#777 60%,#252525 72%,#1e4a30 100%)"></div>
 <div style="left:46px;top:216px;width:5px;height:6px;background:#ddd"></div><div style="left:59px;top:216px;width:6px;height:6px;background:#1c3a6a"></div><div style="left:74px;top:216px;width:6px;height:6px;background:#2a9ad0"></div><div style="left:88px;top:216px;width:7px;height:6px;background:#e6b93a"></div><div style="left:98px;top:214px;width:12px;height:10px;background:#4a6a5a"></div><div style="left:101px;top:216px;width:6px;height:6px;border-radius:50%;background:#d4553a"></div><div style="left:115px;top:216px;width:6px;height:6px;border-radius:50%;background:#5a6ad8"></div><div style="left:127px;top:216px;width:6px;height:6px;border-radius:50%;background:#24c458"></div><div style="left:141px;top:216px;width:6px;height:6px;background:#a8c4d4"></div><div style="left:154px;top:216px;width:6px;height:6px;background:#2a8adc"></div>
 <div style="left:292px;top:216px;width:70px;height:6px;background:#4a6a50;filter:blur(1px)"></div>
 <div class="t" style="left:372px;top:215px;font-size:4px;color:#ddd">19:43</div>
 <div style="left:388px;top:216px;width:5px;height:6px;background:#ddd"></div>
</div>
<div style="left:654px;top:488px;width:399px;height:23px;background:#766ac8;border-radius:0 0 0 10px"></div>
<svg class="a" style="left:1053px;top:488px" width="7" height="23"><path d="M0 0l0 23h6c1 0 1-1 .5-1.500C3 18 1 12 0 6z" fill="#766ac8"/></svg>
<div class="t m" style="left:660px;top:493px;color:#f4f2fc">у меня вот такой масштаб сейчас. 150% это)</div>
<div class="t" style="left:1009px;top:499px;font-size:10.500px;color:#cfcaee">19:44</div>
<svg class="a" style="left:1035px;top:498px" width="16" height="10" fill="none" stroke="#e4e0f5"><path d="M1 5l3 4 6-8M6 8l1 1 6-8"/></svg>

<!-- Alexander -->
<div style="left:510px;top:519px;width:241px;height:94px;background:#212121;border-radius:12px 12px 12px 2px"></div>
<svg class="a" style="left:476px;top:584px" width="28" height="29"><circle cx="14" cy="14" r="14" fill="#3a3a3a"/><circle cx="9" cy="10" r="4" fill="#8a7868"/><circle cx="18" cy="11" r="4" fill="#6a5a50"/><path d="M3 24c2-8 7-7 11-7s9 0 11 7z" fill="#55504a"/></svg>
<div class="t" style="left:517px;top:526px;font-size:9.300px;color:#9d92e6">Александр (Ashoka) Юдаев</div>
<div style="left:517px;top:543px;width:2px;height:30px;background:#766ac8"></div>
<div style="left:523px;top:545px;width:26px;height:27px;background:#f4f4f4;border-radius:2px"></div>
<div class="t" style="left:525px;top:551px;font:7px 'Liberation Serif';color:#333">Задача 4</div>
<div class="t" style="left:527px;top:560px;font-size:4px;color:#333">масс товаров</div>
<div class="t" style="left:556px;top:545px;font-size:9.400px;color:#7d70d8">Лира Вергерберт</div>
<div class="t" style="left:556px;top:562px;font-size:9.400px;letter-spacing:-.05px;color:#eee">помогите, пожалуйста, я счас помру</div>
<div class="t m" style="left:517px;top:579px;font-size:11px;letter-spacing:0">да тут и массивы не нужны)</div>
<div class="t m" style="left:517px;top:594px;font-size:11px;letter-spacing:0">Всю жизнь математически решалось)</div>
<div class="t gt" style="left:721px;top:600px">19:44</div>

<!-- composer -->
<div style="left:474px;top:624px;width:526px;height:47px;border-radius:10px;background:#212121"></div>
<div style="left:1008px;top:624px;width:47px;height:47px;border-radius:50%;background:#212121"></div>
<svg class="a" style="left:487px;top:637px" width="20" height="20" fill="none" stroke="#8a8a8a" stroke-width="1.500"><circle cx="10" cy="10" r="8.500"/><circle cx="7" cy="8" r=".8" fill="#8a8a8a"/><circle cx="13" cy="8" r=".8" fill="#8a8a8a"/><path d="M6 12c1.500 3 6.500 3 8 0"/></svg>
<div class="t" style="left:521px;top:640px;font-size:13px;color:#9a9a9a">Message</div>
<svg class="a" style="left:970px;top:638px" width="70" height="20" fill="none" stroke="#444" stroke-width="1.600"><path d="M5 12l6-8c2-2 5 0 4 2l-7 10c-2 2-5 0-4-2l6-8"/><rect x="57" y="2" width="6" height="11" rx="3" fill="#888" stroke="none"/><path d="M55 10c0 6 10 6 10 0M60 15v4" stroke="#888"/></svg>

<!-- taskbar -->
<div style="left:0;top:687px;width:1280px;height:33px;background:linear-gradient(90deg,#1e4a30 0,#1e4a30 250px,#1d3529 370px,#222524 480px,#222 560px,#3a3a3a 640px,#808080 735px,#5a5a5a 780px,#1f3a2a 835px,#1e4a30 900px,#1e4a30 100%)"></div>
<svg class="a" style="left:3px;top:692px" width="68" height="21"><path d="M0 1h36l14 20H0z" fill="#0c6080"/><path d="M40 1h6l22 20H56z" fill="#0c5a78"/></svg>
<svg class="a" style="left:87px;top:694px" width="17" height="18" fill="none" stroke="#eee" stroke-width="1.200"><circle cx="10" cy="7" r="5.500"/><path d="M6 11l-5 6"/></svg>
<div style="left:129px;top:694px;width:14px;height:20px;background:#b0cfe0"></div><div style="left:131px;top:696px;width:10px;height:3px;background:#e6eef2"></div><div style="left:131px;top:701px;width:10px;height:11px;background:repeating-linear-gradient(0deg,#dfe8d8 0 2px,#8aa0a8 2px 3px)"></div>
<div style="left:169px;top:695px;width:18px;height:18px;border-radius:3px;background:#0b2545"></div><div class="t" style="left:172px;top:699px;font:bold 10px 'Liberation Sans';color:#31a8ff">Ps</div>
<svg class="a" style="left:209px;top:693px" width="21" height="21"><path d="M1 2l6-1 4 2 8-2 1 11-3 8-14-1z" fill="#28b6e0"/><path d="M12 1h7l1 5z" fill="#f0d020"/><rect x="4" y="4" width="13" height="13" fill="#0a0a0a"/><path d="M6 14h5" stroke="#fff"/></svg>
<div class="t" style="left:211px;top:699px;font:bold 7px 'Liberation Sans';color:#fff">WS</div>
<div style="left:253px;top:697px;width:17px;height:14px;background:#f4c84a;border-radius:1px"></div><div style="left:253px;top:695px;width:8px;height:3px;background:#e0a82a"></div><div style="left:258px;top:705px;width:7px;height:6px;background:#6aa8d0"></div>
<div style="left:283px;top:687px;width:39px;height:33px;background:rgba(255,255,255,.18)"></div>
<svg class="a" style="left:293px;top:694px" width="20" height="20"><circle cx="10" cy="10" r="10" fill="#e0b42c"/><path d="M10 10L1.500 5A10 10 0 0 1 18.500 5z" fill="#d8412f"/><path d="M10 10L1.500 5A10 10 0 0 0 10 20z" fill="#2f9e48"/><circle cx="10" cy="10" r="4.500" fill="#fff"/><circle cx="10" cy="10" r="3.400" fill="#4a8ce8"/></svg>
<svg class="a" style="left:334px;top:693px" width="22" height="22"><circle cx="10" cy="11" r="10" fill="#5865f2"/><path d="M5 13c0-5 3-7 5-7s5 2 5 7c-1 1-2 1-3 0h-4c-1 1-2 1-3 0z" fill="#fff"/><circle cx="16" cy="16" r="5" fill="#e03a3a"/><rect x="14" y="14" width="4" height="4" fill="#fff"/></svg>
<svg class="a" style="left:376px;top:694px" width="19" height="19"><circle cx="9.500" cy="9.500" r="9.500" fill="#1ed760"/><path d="M4.500 7c4-1 7-.7 10 .8M5 10c3-.8 6-.5 9 .8M5.500 13c2.500-.6 5-.3 7.500.7" stroke="#123" stroke-width="1.400" fill="none"/></svg>
<svg class="a" style="left:417px;top:694px" width="19" height="20"><path d="M5 1l13 2-3 16L1 16z" fill="#a8c4d4"/><path d="M6 3l10 2-2 11-10-2z" fill="#e0ecf0"/></svg>
<svg class="a" style="left:457px;top:693px" width="21" height="21"><path d="M15 1l5 2.500v14L15 20 6 12l-4 3-1.500-1L4.500 10.500.5 7 2 6l4 3z" fill="#2a8ee0"/><path d="M15 6l-5 4.500 5 4.500z" fill="#1a1a1a"/></svg>
<div style="left:245px;top:718px;width:35px;height:2px;background:#7ac0e4"></div><div style="left:284px;top:718px;width:36px;height:2px;background:#7ac0e4"></div><div style="left:327px;top:718px;width:34px;height:2px;background:#7ac0e4"></div><div style="left:369px;top:718px;width:33px;height:2px;background:#7ac0e4"></div><div style="left:410px;top:718px;width:33px;height:2px;background:#7ac0e4"></div><div style="left:451px;top:718px;width:34px;height:2px;background:#7ac0e4"></div>

<!-- tray -->
<div style="left:950px;top:695px;width:17px;height:19px;background:#6e6e6e"></div>
<div class="t" style="left:953px;top:700px;font-size:9.500px;color:#eee">Ru</div>
<svg class="a" style="left:972px;top:695px" width="180" height="18">
<rect x="1" y="5" width="12" height="9" rx="3" fill="#eee"/><circle cx="4.500" cy="9.500" r="1" fill="#234"/><circle cx="9.500" cy="9.500" r="1" fill="#234"/><circle cx="11" cy="3" r="2.500" fill="#e04a3a"/>
<circle cx="27" cy="9" r="7" fill="#1ed760"/><path d="M23 7c3-1 5-.5 8 .5M23.500 10c2-.5 4-.5 7 .5M24 12.500c2-.3 3.500-.2 5 .5" stroke="#123" fill="none"/>
<circle cx="47" cy="9" r="7" fill="#d8a92c"/><path d="M47 9l-6-3.500A7 7 0 0 1 53 5.500z" fill="#d8412f"/><path d="M47 9l-6-3.500A7 7 0 0 0 47 16z" fill="#2f9e48"/><circle cx="47" cy="9" r="2.800" fill="#4a8ce8" stroke="#fff"/>
<rect x="61" y="3" width="13" height="12" fill="#111"/><path d="M63 9c3-4 6-4 9 0-3 4-6 4-9 0z" fill="#76b900"/>
<path d="M81 2l6 2v5c0 4-3 6-6 7-3-1-6-3-6-7V4z" fill="#ddd"/><path d="M81 2v14c-3-1-6-3-6-7V4z" fill="#444"/><path d="M84 9l4 7h-8z" fill="#f2c230"/>
<ellipse cx="107" cy="9" rx="5" ry="8" fill="#1272d0"/><path d="M105 6l4 5-2 2V5l2 2-4 5" stroke="#fff" fill="none"/>
<rect x="121" y="5" width="12" height="9" fill="#ddd"/><rect x="123" y="7" width="6" height="5" fill="#333"/>
<path d="M143 15a9 9 0 0 1 9-9M146 15a6 6 0 0 1 6-6M149 15a3 3 0 0 1 3-3" stroke="#aaa" fill="none"/>
<path d="M162 6h3l3-3v12l-3-3h-3z" fill="none" stroke="#ddd"/><rect x="167" y="9" width="7" height="7" fill="#d23a3a"/>
</svg>
<div class="t" style="left:1155px;top:698px;font-size:10.500px;color:#ddd">РУС</div>
<div class="t" style="left:1195px;top:691px;font-size:10px;color:#e4e4e4">19:43</div>
<div class="t" style="left:1184px;top:704px;font-size:9.500px;color:#e4e4e4">08.04.2022</div>
<div style="left:1246px;top:695px;width:13px;height:16px;background:#e8e8e8;border-radius:1px"></div>
<div style="left:1248px;top:699px;width:9px;height:1px;background:#333;box-shadow:0 3px 0 #333,0 6px 0 #333"></div>

<!-- zoom popup -->
<div style="left:765px;top:56px;width:233px;height:37px;background:#fff;border-radius:3px;box-shadow:0 1px 3px rgba(0,0,0,.35)"></div>
<div class="t" style="left:778px;top:69px;font-size:10px;color:#555">100 %</div>
<div style="left:860px;top:73px;width:11px;height:1.500px;background:#555"></div>
<div style="left:887px;top:73px;width:11px;height:1.500px;background:#555"></div><div style="left:892px;top:68px;width:1.500px;height:11px;background:#555"></div>
<div style="left:912px;top:61px;width:70px;height:26px;border:1px solid #eee;border-radius:3px"></div>
<div class="t" style="left:925px;top:69px;font-size:10.500px;color:#3d6ba5">Сбросить</div>

<!-- watermark -->
<svg class="a" style="left:776px;top:626px" width="68" height="68">
<circle cx="32" cy="34" r="32" fill="#0d5cb0"/><path d="M8 22C12 8 24 2 40 3c8 1 14 6 18 12L46 20 30 14 18 24z" fill="#1fae3e"/><path d="M24 4c8-3 20-1 24 6l-10 4-12-4z" fill="#a8dcee"/><path d="M52 22c8 6 12 20 8 28l-12-6z" fill="#17a83a"/><path d="M16 42l14 6 18 6c-4 6-12 10-22 9-5-4-9-12-10-21z" fill="#22a83a"/>
<path d="M5 33L56 17 46 56 32 46 25 54 22 42z" fill="#f4f8fb"/><path d="M22 42L56 17 32 46 25 54z" fill="#c8d8e4"/></svg>
<div class="t" style="left:854px;top:623px;font-size:52px;line-height:66px;color:#fff;letter-spacing:3.800px;-webkit-text-stroke:2.500px #111;paint-order:stroke fill">telegrammy.net</div>
</div></body></html>
